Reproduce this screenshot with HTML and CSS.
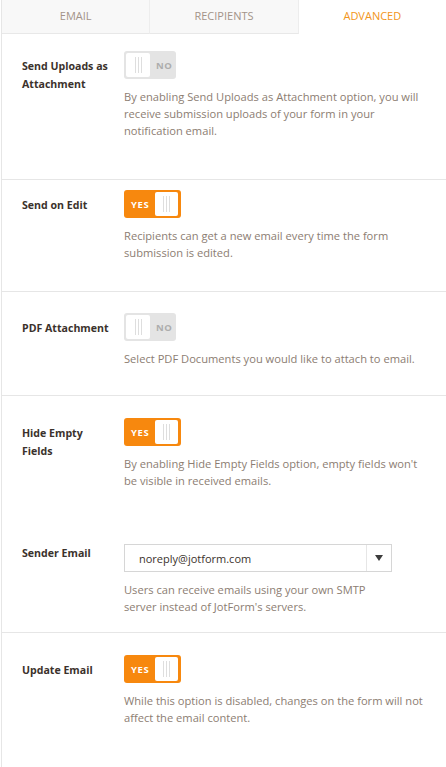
FILE: index.html
```html
<!DOCTYPE html>
<html>
<head>
<meta charset="utf-8">
<link rel="stylesheet" href="styles.css">
</head>
<body>
<div class="tabs">
  <div class="tab">EMAIL</div>
  <div class="tab">RECIPIENTS</div>
  <div class="tab active">ADVANCED</div>
</div>
<div class="panel">
  <section class="group g1">
    <div class="row">
      <div class="label">Send Uploads as Attachment</div>
      <div class="control">
        <div class="toggle off"><span class="knob"><i class="grip"></i></span><span class="tlabel">NO</span></div>
        <p class="desc">By enabling Send Uploads as Attachment option, you will receive submission uploads of your form in your notification email.</p>
      </div>
    </div>
  </section>
  <section class="group g2">
    <div class="row">
      <div class="label">Send on Edit</div>
      <div class="control">
        <div class="toggle on"><span class="tlabel">YES</span><span class="knob"><i class="grip"></i></span></div>
        <p class="desc">Recipients can get a new email every time the form submission is edited.</p>
      </div>
    </div>
  </section>
  <section class="group g3">
    <div class="row">
      <div class="label">PDF Attachment</div>
      <div class="control">
        <div class="toggle off"><span class="knob"><i class="grip"></i></span><span class="tlabel">NO</span></div>
        <p class="desc">Select PDF Documents you would like to attach to email.</p>
      </div>
    </div>
  </section>
  <section class="group g4">
    <div class="row">
      <div class="label">Hide Empty Fields</div>
      <div class="control">
        <div class="toggle on"><span class="tlabel">YES</span><span class="knob"><i class="grip"></i></span></div>
        <p class="desc">By enabling Hide Empty Fields option, empty fields won't be visible in received emails.</p>
      </div>
    </div>
    <div class="row row-select">
      <div class="label label-top">Sender Email</div>
      <div class="control control-narrow">
        <div class="select">
          <span class="select-value">noreply@jotform.com</span>
          <span class="select-arrow"><svg width="8" height="6" viewBox="0 0 8 6"><path d="M0 0 H8 L4 6 Z" fill="#3d3d3d"/></svg></span>
        </div>
        <p class="desc">Users can receive emails using your own SMTP server instead of JotForm's servers.</p>
      </div>
    </div>
  </section>
  <section class="group g5">
    <div class="row">
      <div class="label">Update Email</div>
      <div class="control">
        <div class="toggle on"><span class="tlabel">YES</span><span class="knob"><i class="grip"></i></span></div>
        <p class="desc">While this option is disabled, changes on the form will not affect the email content.</p>
      </div>
    </div>
  </section>
</div>
</body>
</html>
```
FILE: styles.css
```css
* { box-sizing: border-box; }
html, body { margin: 0; padding: 0; background: #fff; }
body {
  font-family: "Open Sans", "Noto Sans", sans-serif;
  width: 446px;
  height: 767px;
  overflow: hidden;
}
.tabs {
  display: flex;
  height: 34px;
  border-left: 1px solid #e6e6e6;
  margin-left: 1px;
}
.tab {
  flex: 1;
  display: flex;
  align-items: center;
  justify-content: center;
  background: #f8f8f8;
  border-bottom: 1px solid #e8e8e8;
  border-right: 1px solid #ededed;
  color: #a39388;
  font-size: 11px;
  padding-bottom: 3px;
}
.tab.active {
  background: #fff;
  border-bottom-color: transparent;
  border-right: none;
  color: #f29520;
}
.panel {
  margin-left: 1px;
  border-left: 1px solid #e6e6e6;
  min-height: 733px;
}
.group { border-bottom: 1px solid #e6e6e6; }
.group.g1 { padding: 17px 0 40px; }
.group.g2 { padding: 10px 0 30px; }
.group.g3 { padding: 21px 0 28px; }
.group.g4 { padding: 22px 0 17px; }
.group.g5 { padding: 22px 0 40px; border-bottom: none; }
.row {
  display: grid;
  grid-template-columns: 90px 1fr;
  column-gap: 12px;
  padding: 0 16px 0 20px;
}
.row-select { margin-top: 55px; }
.label {
  font-size: 10.6px;
  font-weight: 700;
  color: #3b322c;
  line-height: 18px;
  padding-top: 6px;
}
.label.label-top { padding-top: 0; }
.control { min-width: 0; }
.control-narrow { width: 268px; }
.desc {
  margin: 9px 0 0;
  font-size: 11.15px;
  line-height: 17px;
  color: #8c7d72;
}
.toggle {
  display: inline-flex;
  align-items: center;
  height: 28px;
  border-radius: 3px;
  padding: 2px;
  vertical-align: top;
}
.toggle.off { width: 52px; background: #e4e4e4; }
.toggle.on { width: 57px; background: #f7880e; padding: 2px 3px 2px 2px; }
.knob {
  width: 24px;
  height: 24px;
  background: #fff;
  border-radius: 2px;
  display: flex;
  align-items: center;
  justify-content: center;
}
.toggle.on .knob { width: 23px; }
.grip {
  display: block;
  width: 7px;
  height: 16px;
  background: linear-gradient(to right, #dedede 0, #dedede 1px, transparent 1px, transparent 3px, #dedede 3px, #dedede 4px, transparent 4px, transparent 6px, #dedede 6px, #dedede 7px);
}
.tlabel {
  font-size: 9.5px;
  font-weight: 700;
  letter-spacing: 0.6px;
}
.toggle.off .tlabel { color: #adadad; margin-left: 6px; }
.toggle.on .tlabel { color: #fff; margin-left: 5px; margin-right: 6px; }
.select {
  display: flex;
  align-items: center;
  height: 28px;
  border: 1px solid #d6d6d6;
  background: #fff;
}
.select-value {
  flex: 1;
  padding-left: 14px;
  font-size: 11px;
  color: #3b322c;
}
.select-arrow {
  width: 25px;
  height: 100%;
  border-left: 1px solid #e6e6e6;
  display: flex;
  align-items: center;
  justify-content: center;
}
.select-arrow svg { display: block; }
```
